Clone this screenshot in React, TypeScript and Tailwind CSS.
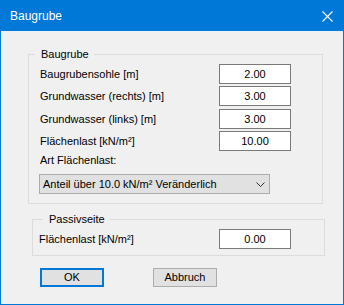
import React from "react";

const font = { fontFamily: "'Liberation Sans', Arial, sans-serif" };

const inputClass =
  "w-[72px] h-[20px] border border-[#7a7a7a] bg-white flex items-center justify-center text-[11px] text-black";

function Row({ label, value, labelWidth, className = "" }: { label: string; value: string; labelWidth: string; className?: string }) {
  return (
    <div className={`flex items-center h-[20px] ${className}`}>
      <span className={`${labelWidth} text-[11px] text-black leading-[15px]`}>{label}</span>
      <div className={inputClass}>{value}</div>
    </div>
  );
}

export default function App() {
  return (
    <div className="w-[344px] h-[305px] border border-[#0078d7] bg-[#f0f0f0] flex flex-col" style={font}>
      {/* Title bar */}
      <div className="h-[30px] bg-[#0078d7] flex items-center justify-between pl-[9px] pr-[10px]">
        <span className="text-[12px] text-white leading-[15px]">Baugrube</span>
        <svg width="11" height="11" viewBox="0 0 11 11">
          <path d="M0.5 0.5 L10.5 10.5 M10.5 0.5 L0.5 10.5" stroke="white" strokeWidth="1.1" />
        </svg>
      </div>

      {/* Baugrube group */}
      <fieldset className="ml-[27px] mt-[16px] w-[295px] border border-[#dcdcdc] pl-[11px] pb-[9px]">
        <legend className="ml-[-5px] pl-[6px] pr-[5px] text-[11px] leading-[15px] text-black">Baugrube</legend>
        <Row label="Baugrubensohle [m]" value="2.00" labelWidth="w-[179px]" className="mt-[2px]" />
        <Row label="Grundwasser (rechts) [m]" value="3.00" labelWidth="w-[179px]" className="mt-[2px]" />
        <Row label="Grundwasser (links) [m]" value="3.00" labelWidth="w-[179px]" className="mt-[3px]" />
        <Row label="Flächenlast [kN/m²]" value="10.00" labelWidth="w-[179px]" className="mt-[2px]" />
        <div className="mt-[2px] text-[11px] leading-[15px] text-black">Art Flächenlast:</div>
        <div className="mt-[6px] ml-[-1px] w-[231px] h-[20px] bg-[#e1e1e1] border border-[#adadad] flex items-center justify-between pl-[3px] pr-[4px] text-[11px] text-black">
          <span>Anteil über 10.0 kN/m² Veränderlich</span>
          <svg width="9" height="5" viewBox="0 0 9 5">
            <path d="M0.5 0.5 L4.5 4.5 L8.5 0.5" stroke="#333" strokeWidth="1" fill="none" />
          </svg>
        </div>
      </fieldset>

      {/* Passivseite group */}
      <fieldset className="ml-[31px] mt-[8px] w-[293px] border border-[#dcdcdc] pl-[6px] pb-[6px]">
        <legend className="ml-[4px] pl-[6px] pr-[5px] text-[11px] leading-[15px] text-black">Passivseite</legend>
        <Row label="Flächenlast [kN/m²]" value="0.00" labelWidth="w-[180px]" className="mt-[2px]" />
      </fieldset>

      {/* Buttons */}
      <div className="flex mt-[12px] pl-[39px]">
        <button className="w-[64px] h-[19px] border-2 border-[#0078d7] bg-[#e1e1e1] text-[11px] text-black flex items-center justify-center">
          OK
        </button>
        <button className="ml-[49px] w-[64px] h-[19px] border border-[#adadad] bg-[#e1e1e1] text-[11px] text-black flex items-center justify-center">
          Abbruch
        </button>
      </div>
    </div>
  );
}
